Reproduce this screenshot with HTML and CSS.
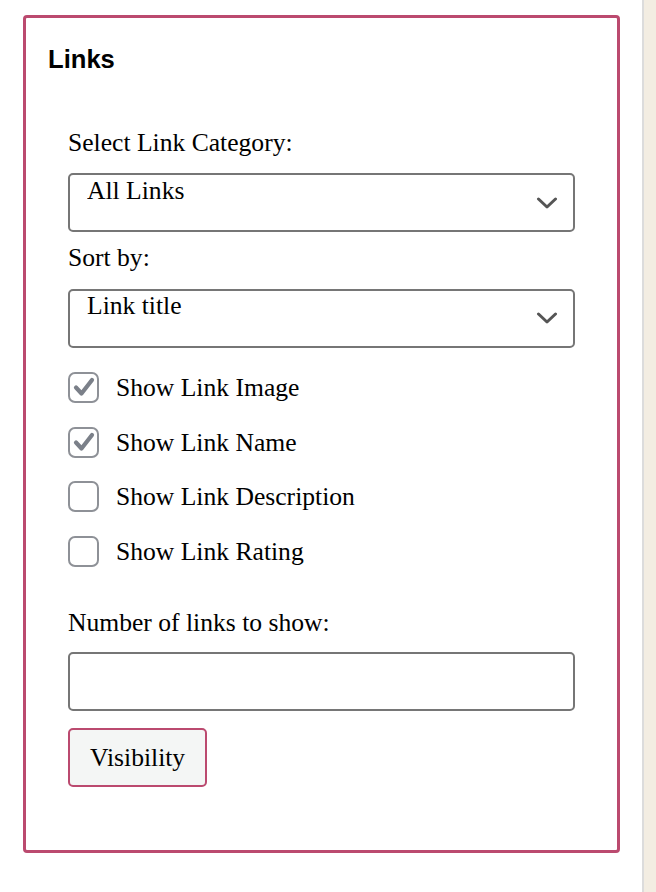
FILE: index.html
```html
<!DOCTYPE html>
<html lang="en">
<head>
<meta charset="utf-8">
<title>Links widget</title>
<link rel="stylesheet" href="styles.css">
</head>
<body>
<div class="page">
  <main class="main">
    <section class="card">
      <h2 class="card-title">Links</h2>
      <form class="form">
        <label class="field-label" for="cat">Select Link Category:</label>
        <div class="select-wrap">
          <select id="cat" class="select"><option>All Links</option></select>
          <svg class="chevron" width="22" height="12" viewBox="0 0 22 12" aria-hidden="true"><path d="M2.5 2 L11 10 L19.5 2" fill="none" stroke="#555" stroke-width="3" stroke-linecap="round" stroke-linejoin="round"/></svg>
        </div>
        <label class="field-label" for="sort">Sort by:</label>
        <div class="select-wrap">
          <select id="sort" class="select"><option>Link title</option></select>
          <svg class="chevron" width="22" height="12" viewBox="0 0 22 12" aria-hidden="true"><path d="M2.5 2 L11 10 L19.5 2" fill="none" stroke="#555" stroke-width="3" stroke-linecap="round" stroke-linejoin="round"/></svg>
        </div>
        <div class="checks">
          <label class="check">
            <span class="box"><input type="checkbox" checked><svg class="tick" width="31" height="31" viewBox="0 0 31 31" aria-hidden="true"><path d="M8 15.5 L13.5 21.5 L24 8" fill="none" stroke="#7b8089" stroke-width="4.2" stroke-linecap="round" stroke-linejoin="round"/></svg></span>
            <span>Show Link Image</span>
          </label>
          <label class="check">
            <span class="box"><input type="checkbox" checked><svg class="tick" width="31" height="31" viewBox="0 0 31 31" aria-hidden="true"><path d="M8 15.5 L13.5 21.5 L24 8" fill="none" stroke="#7b8089" stroke-width="4.2" stroke-linecap="round" stroke-linejoin="round"/></svg></span>
            <span>Show Link Name</span>
          </label>
          <label class="check">
            <span class="box"><input type="checkbox"></span>
            <span>Show Link Description</span>
          </label>
          <label class="check">
            <span class="box"><input type="checkbox"></span>
            <span>Show Link Rating</span>
          </label>
        </div>
        <label class="field-label field-label--tight" for="num">Number of links to show:</label>
        <input id="num" class="text-input" type="text">
        <div class="actions">
          <button type="button" class="btn">Visibility</button>
        </div>
      </form>
    </section>
  </main>
  <aside class="side"></aside>
</div>
</body>
</html>
```

FILE: styles.css
```css
html, body {
  margin: 0;
  padding: 0;
  height: 100%;
}

body {
  background: #ffffff;
  font-family: "Liberation Serif", "Times New Roman", serif;
  color: #000;
}

.page {
  display: flex;
  min-height: 892px;
}

.main {
  width: 642px;
  flex: 0 0 642px;
  padding: 15px 22px 0 23px;
  box-sizing: border-box;
}

.side {
  flex: 1;
  background: #f3ede2;
  border-left: 2px solid #dcdcdc;
}

.card {
  box-sizing: border-box;
  width: 597px;
  height: 838px;
  border: 3px solid #bb4a6f;
  border-radius: 4px;
  padding: 25.5px 21px 0 21px;
}

.card-title {
  margin: 0;
  padding-left: 1px;
  font-family: "Liberation Sans", Arial, sans-serif;
  font-weight: 700;
  font-size: 25.6px;
  line-height: 30px;
}

.form {
  display: flex;
  flex-direction: column;
  margin: 54px 21px 0 21px;
  font-size: 25.6px;
  line-height: 29.44px;
}

.field-label {
  display: block;
  margin-bottom: 16.5px;
}

.field-label--tight {
  margin-bottom: 15px;
}

.select-wrap {
  position: relative;
  margin-bottom: 10.5px;
}

.select {
  -webkit-appearance: none;
  appearance: none;
  display: block;
  width: 100%;
  box-sizing: border-box;
  height: 59px;
  margin: 0;
  border: 2px solid #767676;
  border-radius: 5px;
  background: #fff;
  font-family: inherit;
  font-size: 25.6px;
  color: #000;
  padding: 0 50px 25.5px 17px;
}

.chevron {
  position: absolute;
  right: 17px;
  top: 23.5px;
  pointer-events: none;
}

.checks {
  display: flex;
  flex-direction: column;
  gap: 23.5px;
  margin-top: 14px;
  margin-bottom: 41px;
}

.check {
  display: flex;
  align-items: center;
  gap: 17px;
  height: 31px;
}

.box {
  position: relative;
  width: 31px;
  height: 31px;
  flex: 0 0 31px;
  box-sizing: border-box;
  border: 2px solid #8e9197;
  border-radius: 7px;
  background: #fff;
}

.box input {
  position: absolute;
  inset: 0;
  margin: 0;
  opacity: 0;
  width: 100%;
  height: 100%;
}

.tick {
  position: absolute;
  left: -2px;
  top: -2px;
  pointer-events: none;
}

.text-input {
  display: block;
  box-sizing: border-box;
  width: 100%;
  height: 59px;
  margin: 0 0 17px 0;
  border: 2px solid #767676;
  border-radius: 5px;
  background: #fff;
  font-family: inherit;
  font-size: 25.6px;
  padding: 0 17px;
}

.actions {
  display: flex;
}

.btn {
  box-sizing: border-box;
  height: 59px;
  border: 2px solid #bb4a6f;
  border-radius: 5px;
  background: #f4f6f5;
  font-family: "Liberation Serif", "Times New Roman", serif;
  font-size: 25.6px;
  line-height: 29.44px;
  color: #000;
  padding: 0 20px;
}
```
